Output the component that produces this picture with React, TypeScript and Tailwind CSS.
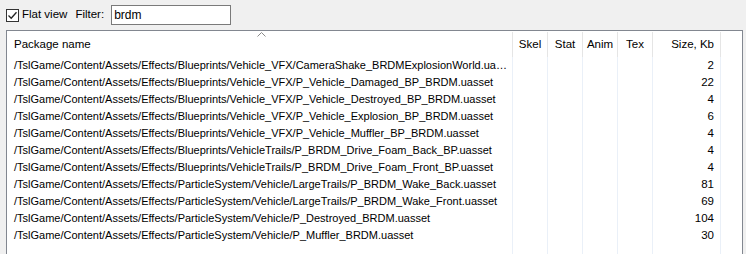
import React from "react";

const rows: [string, string][] = [
  ["/TslGame/Content/Assets/Effects/Blueprints/Vehicle_VFX/CameraShake_BRDMExplosionWorld.uasset", "2"],
  ["/TslGame/Content/Assets/Effects/Blueprints/Vehicle_VFX/P_Vehicle_Damaged_BP_BRDM.uasset", "22"],
  ["/TslGame/Content/Assets/Effects/Blueprints/Vehicle_VFX/P_Vehicle_Destroyed_BP_BRDM.uasset", "4"],
  ["/TslGame/Content/Assets/Effects/Blueprints/Vehicle_VFX/P_Vehicle_Explosion_BP_BRDM.uasset", "6"],
  ["/TslGame/Content/Assets/Effects/Blueprints/Vehicle_VFX/P_Vehicle_Muffler_BP_BRDM.uasset", "4"],
  ["/TslGame/Content/Assets/Effects/Blueprints/VehicleTrails/P_BRDM_Drive_Foam_Back_BP.uasset", "4"],
  ["/TslGame/Content/Assets/Effects/Blueprints/VehicleTrails/P_BRDM_Drive_Foam_Front_BP.uasset", "4"],
  ["/TslGame/Content/Assets/Effects/ParticleSystem/Vehicle/LargeTrails/P_BRDM_Wake_Back.uasset", "81"],
  ["/TslGame/Content/Assets/Effects/ParticleSystem/Vehicle/LargeTrails/P_BRDM_Wake_Front.uasset", "69"],
  ["/TslGame/Content/Assets/Effects/ParticleSystem/Vehicle/P_Destroyed_BRDM.uasset", "104"],
  ["/TslGame/Content/Assets/Effects/ParticleSystem/Vehicle/P_Muffler_BRDM.uasset", "30"],
];

const mid = ["Skel", "Stat", "Anim", "Tex"];

export default function App() {
  return (
    <div className="h-[254px] w-[746px] overflow-hidden bg-[#f0f0f0] font-['Liberation_Sans',sans-serif] text-[11px] text-black">
      {/* toolbar */}
      <div className="flex h-[30px] items-center pl-[6px] text-[12px]">
        <div className="flex h-[13px] w-[13px] items-center justify-center border border-[#333] bg-white">
          <svg width="11" height="11" viewBox="0 0 11 11">
            <path d="M1.5 5.5 L4.2 8.2 L9.5 2.2" fill="none" stroke="#222" strokeWidth="1.3" />
          </svg>
        </div>
        <span className="ml-[3px] text-[11.5px]">Flat view</span>
        <span className="ml-[8px] text-[11.5px]">Filter:</span>
        <div className="ml-[7px] flex h-[20px] w-[120px] items-center border border-[#7a7a7a] bg-white pl-[2px]">
          brdm
        </div>
      </div>

      {/* list */}
      <div className="ml-[6px] h-[224px] w-[737px] border-l border-r border-t border-[#828790] bg-white">
        <div className="relative flex h-[26px] pt-[1px]">
          <div className="flex w-[505px] items-center pl-[7px] text-[11.5px]">Package name</div>
          <svg className="absolute left-[250px] top-[1px]" width="9" height="5" viewBox="0 0 9 5">
            <path d="M0.5 4.5 L4.5 0.5 L8.5 4.5" fill="none" stroke="#8a8a8a" strokeWidth="1" />
          </svg>
          {mid.map((m) => (
            <div key={m} className="flex w-[35px] items-center justify-center border-l border-[#e5e5e5] text-[11.5px]">{m}</div>
          ))}
          <div className="flex w-[69px] items-center justify-end border-l border-r border-[#e5e5e5] pr-[6px] text-[11.5px]">Size, Kb</div>
        </div>
        {rows.map(([name, size]) => (
          <div key={name} className="flex h-[17px] items-center">
            <div className="w-[505px] truncate pl-[7px] pr-[2px]">{name}</div>
            {mid.map((m) => (
              <div key={m} className="h-full w-[35px] border-l border-[#eaf0f8]" />
            ))}
            <div className="flex h-full w-[69px] items-center justify-end border-l border-r border-[#eaf0f8] pr-[6px] text-[11.5px]">{size}</div>
          </div>
        ))}
        <div className="flex h-[20px]">
          <div className="w-[505px]" />
          {mid.map((m) => (
            <div key={m} className="h-full w-[35px] border-l border-[#eaf0f8]" />
          ))}
          <div className="h-full w-[69px] border-l border-r border-[#eaf0f8]" />
        </div>
      </div>
    </div>
  );
}
